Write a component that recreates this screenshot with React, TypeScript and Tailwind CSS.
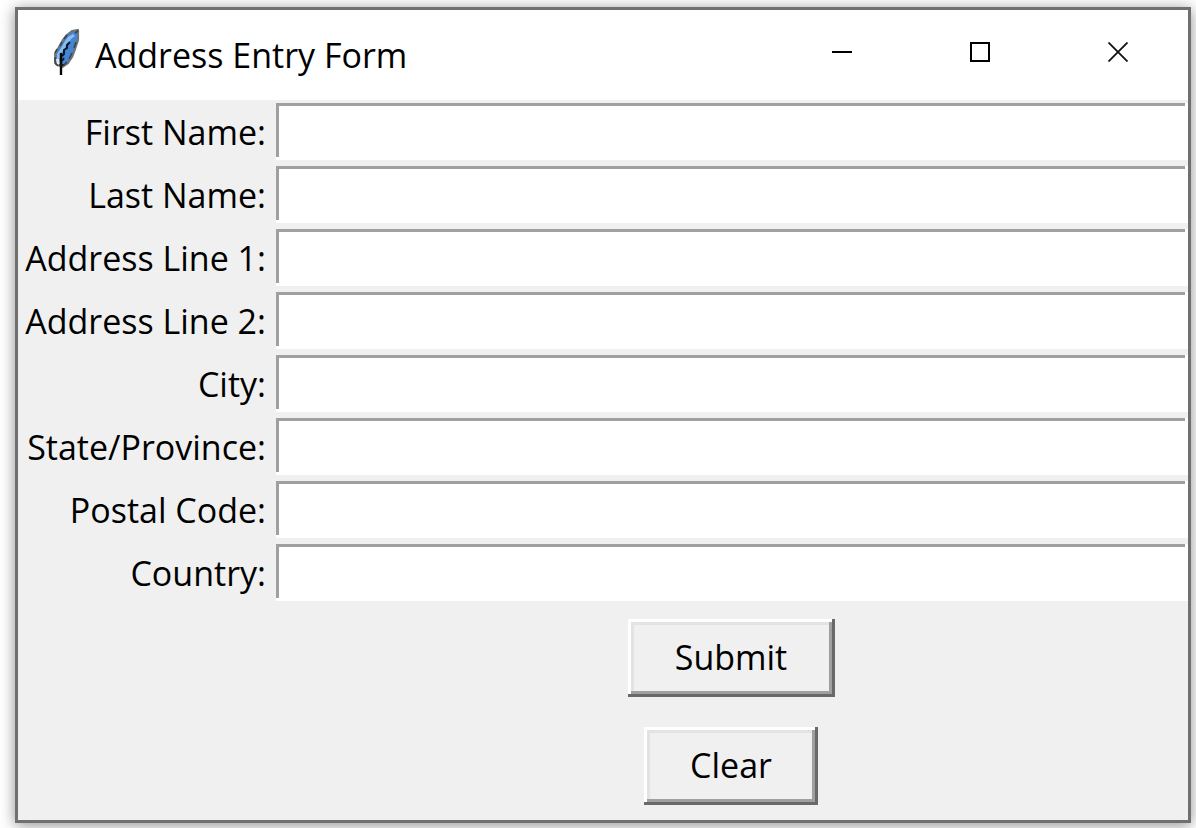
import { useState } from "react";

const FIELDS = [
  { id: "first-name", label: "First Name:" },
  { id: "last-name", label: "Last Name:" },
  { id: "address-line-1", label: "Address Line 1:" },
  { id: "address-line-2", label: "Address Line 2:" },
  { id: "city", label: "City:" },
  { id: "state-province", label: "State/Province:" },
  { id: "postal-code", label: "Postal Code:" },
  { id: "country", label: "Country:" },
];

const RAISED =
  "h-[78px] bg-[#f0f0f0] pb-0.5 text-center shadow-[inset_-3px_-3px_0_#696969,inset_3px_3px_0_#ffffff,inset_-6px_-6px_0_#a0a0a0,inset_6px_6px_0_#e3e3e3]";

function FeatherIcon() {
  return (
    <svg className="h-12 w-7 shrink-0" viewBox="0 0 28 48" fill="none" aria-hidden="true">
      <path
        d="M20 2L26 1L26 11L23 20L20 28L16 34L10 38L4 35L3 25L7 18L11 11L15 6Z"
        fill="#4384d3"
        stroke="#6f7477"
        strokeWidth="2.2"
        strokeLinejoin="round"
      />
      <path d="M21 5L16 8L13 12L9 19L5 25L5 31L8 29L9 24L13 20L14 16L17 14L19 10L23 7Z" fill="#8abcf0" />
      <path d="M4 30L7 30L8 36L5 35Z" fill="#e2e6e8" />
      <path d="M15 6L12 10M10 13L8 17M5 20L3 24M3 28V34L6 37M26 2L23 4" stroke="#39434c" strokeWidth="1.6" />
      <path d="M24 13L22 19M20 24L17 30M15 33L11 37" stroke="#3a4550" strokeWidth="1.6" />
      <path d="M18 13L15 16V19L12 21V25L10 27" stroke="#0c1828" strokeWidth="2" />
      <path d="M9 24V46" stroke="#050505" strokeWidth="2.4" />
      <path d="M10 32L12 29" stroke="#0c1828" strokeWidth="1.8" />
      <path d="M7 35L9 39L12 35" fill="#14181c" />
    </svg>
  );
}

export default function App() {
  const [values, setValues] = useState<Record<string, string>>({});

  return (
    <div className="flex min-h-screen bg-white pt-[7px] pr-[5px] pb-[5px] pl-[15px] font-['Open_Sans','Noto_Sans',sans-serif] text-black">
      <main className="flex min-w-0 flex-1 flex-col border-[3px] border-[#707070] bg-[#f0f0f0] shadow-[0_2px_14px_rgba(0,0,0,0.45)]">
        <header className="flex h-[90px] items-start bg-white pl-[34px]">
          <div className="flex h-full min-w-0 flex-1 items-center gap-[15px]">
            <div className="pb-1">
              <FeatherIcon />
            </div>
            <h1 className="truncate text-[34px]">Address Entry Form</h1>
          </div>
          <div className="flex shrink-0">
            <button type="button" aria-label="Minimize" className="flex h-[84px] w-[138px] items-center justify-center">
              <svg className="size-5" viewBox="0 0 20 20" stroke="#000" strokeWidth="2">
                <path d="M0 10H20" />
              </svg>
            </button>
            <button type="button" aria-label="Maximize" className="flex h-[84px] w-[137px] items-center justify-center">
              <svg className="size-5" viewBox="0 0 20 20" fill="none" stroke="#000" strokeWidth="2">
                <path d="M1 1H19V19H1Z" />
              </svg>
            </button>
            <button type="button" aria-label="Close" className="flex h-[84px] w-[140px] items-center justify-center">
              <svg className="size-5" viewBox="0 0 20 20" stroke="#111" strokeWidth="1.8">
                <path d="M.5.5L19.5 19.5M19.5.5L.5 19.5" />
              </svg>
            </button>
          </div>
        </header>
        <form className="flex flex-1 flex-col" onSubmit={(e) => e.preventDefault()}>
          {FIELDS.map(({ id, label }) => (
            <div key={id} className="flex h-[63px] items-center">
              <label htmlFor={id} className="w-[258px] shrink-0 pt-0.5 pr-2.5 text-right text-[34px] whitespace-nowrap">
                {label}
              </label>
              <input
                id={id}
                type="text"
                value={values[id] ?? ""}
                onChange={(e) => setValues({ ...values, [id]: e.target.value })}
                className="h-[57px] min-w-0 flex-1 bg-white px-2 text-[34px] shadow-[inset_-3px_-3px_0_#ffffff,inset_3px_3px_0_#a0a0a0] outline-none"
              />
            </div>
          ))}
          <div className="flex flex-col items-center gap-[30px] py-[15px] pl-[256px] text-[34px]">
            <button type="submit" className={`${RAISED} w-[207px]`}>
              Submit
            </button>
            <button type="button" onClick={() => setValues({})} className={`${RAISED} w-[174px]`}>
              Clear
            </button>
          </div>
        </form>
      </main>
    </div>
  );
}
